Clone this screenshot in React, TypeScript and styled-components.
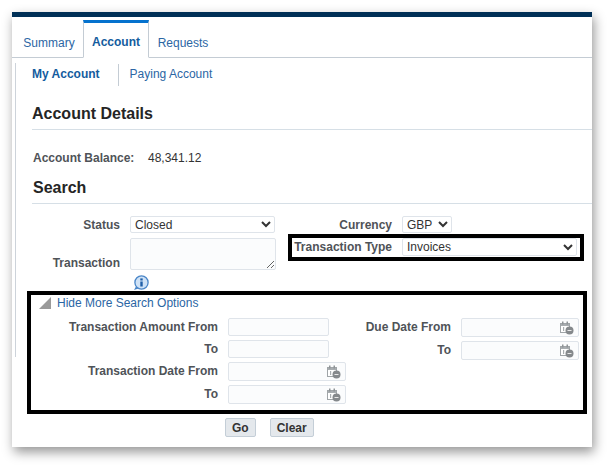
import React from "react";
import styled, { createGlobalStyle } from "styled-components";

const Global = createGlobalStyle`
  html, body { margin: 0; padding: 0; background: #fff; }
  body { font-family: "Liberation Sans", Arial, sans-serif; font-size: 12px; color: #4f5358; }
`;

const Page = styled.div`
  padding: 12px 18px 18px 12px;
  width: 610px;
  height: 465px;
  box-sizing: border-box;
  overflow: hidden;
`;

const Card = styled.div`
  width: 580px;
  height: 435px;
  background: #fff;
  box-shadow: 2px 5px 11px rgba(0, 0, 0, 0.42);
  border-top: 5px solid #003057;
  box-sizing: border-box;
`;

const Tabs = styled.div`
  display: flex;
  height: 41px;
  padding: 3px 0 0 3px;
  box-sizing: border-box;
  border-bottom: 1px solid #c4ccd4;
  margin-bottom: 0;
`;

const Tab = styled.a<{ $active?: boolean; $w: number }>`
  width: ${(p) => p.$w}px;
  box-sizing: border-box;
  text-align: center;
  font-size: 12px;
  color: ${(p) => (p.$active ? "#145c9e" : "#2b66a4")};
  font-weight: ${(p) => (p.$active ? 700 : 400)};
  line-height: ${(p) => (p.$active ? "39px" : "46px")};
  height: ${(p) => (p.$active ? "38px" : "37px")};
  ${(p) =>
    p.$active
      ? "border: 1px solid #c4ccd4; border-top: 3px solid #0572ce; border-bottom: 1px solid #fff; background: #fff;"
      : ""}
`;

const Panel = styled.div`
  position: relative;
  margin-left: 3px;
  padding-left: 17px;
  &::before {
    content: "";
    position: absolute;
    left: 0;
    top: -1px;
    width: 1px;
    height: 294px;
    background: #cdd3da;
  }
`;

const SubNav = styled.div`
  display: flex;
  align-items: center;
  height: 22px;
  margin-top: 6px;
`;

const SubLink = styled.a<{ $active?: boolean }>`
  font-size: 12px;
  margin-bottom: 2px;
  color: ${(p) => (p.$active ? "#145c9e" : "#2b66a4")};
  font-weight: ${(p) => (p.$active ? 700 : 400)};
`;

const SubDivider = styled.span`
  width: 1px;
  height: 22px;
  background: #c4ccd4;
  margin: 0 11px 0 18px;
`;

const Heading = styled.h2<{ $top: number }>`
  margin: ${(p) => p.$top}px 0 0;
  padding-bottom: 6px;
  font-size: 16px;
  line-height: 18px;
  font-weight: 700;
  color: #252525;
  border-bottom: 1px solid #d6dfe6;
`;

const SearchHeading = styled(Heading)`
  padding-left: 1px;
`;

const BalanceRow = styled.div`
  display: flex;
  margin: 21px 0 0 1px;
  line-height: 14px;
  font-size: 12px;
`;

const BalanceLabel = styled.span`
  width: 115px;
  font-weight: 700;
  color: #4f5358;
`;

const BalanceValue = styled.span`
  color: #333;
`;

const FormGrid = styled.div`
  display: flex;
  padding-top: 12px;
`;

const LeftColumn = styled.div`
  width: 256px;
  display: flex;
  flex-direction: column;
`;

const RightColumn = styled.div`
  display: flex;
  flex-direction: column;
  width: 296px;
`;

const Row = styled.div<{ $end?: boolean; $top?: number }>`
  display: flex;
  align-items: ${(p) => (p.$end ? "flex-end" : "center")};
  gap: 10px;
  margin-top: ${(p) => p.$top ?? 0}px;
`;

const Label = styled.label<{ $w: number; $raise?: number }>`
  width: ${(p) => p.$w}px;
  flex: none;
  text-align: right;
  font-size: 12px;
  font-weight: 700;
  line-height: 14px;
  color: #4f5358;
  white-space: nowrap;
  margin-bottom: ${(p) => p.$raise ?? 0}px;
`;

const NativeSelect = styled.select<{ $w: number; $h?: number }>`
  width: ${(p) => p.$w}px;
  height: ${(p) => p.$h ?? 17}px;
  box-sizing: border-box;
  font-family: "Liberation Sans", Arial, sans-serif;
  font-size: 12px;
  color: #333;
  background: #fff;
  border: 1px solid #dfe4ea;
  border-radius: 2px;
  padding: 0;
  outline: none;
`;

const TextBox = styled.textarea`
  display: block;
  width: 146px;
  height: 32px;
  box-sizing: border-box;
  margin: 0;
  background: #fbfcfd;
  border: 1px solid #dfe4ea;
  border-radius: 2px;
  outline: none;
`;

const InfoWrap = styled.div`
  height: 16px;
  margin: 5px 0 0 101px;
`;

const Highlight = styled.div`
  border: 4px solid #000;
  box-sizing: border-box;
`;

const TypeBox = styled(Highlight)`
  height: 27px;
  margin-top: 1px;
  padding-top: 0;
`;

const OptionsBox = styled(Highlight)`
  width: 560px;
  height: 123px;
  margin-left: -5px;
`;

const ToggleRow = styled.div`
  display: flex;
  align-items: center;
  height: 14px;
  padding: 1px 0 0 8px;
  gap: 6px;
`;

const ToggleLink = styled.a`
  font-size: 12px;
  color: #2b66a4;
`;

const OptionsGrid = styled.div`
  display: flex;
  margin-top: 8px;
`;

const OptionsColumn = styled.div<{ $w: number }>`
  width: ${(p) => p.$w}px;
  display: flex;
  flex-direction: column;
`;

const Field = styled.div<{ $w: number; $h: number }>`
  width: ${(p) => p.$w}px;
  height: ${(p) => p.$h}px;
  box-sizing: border-box;
  background: #fbfcfd;
  border: 1px solid #dfe4ea;
  border-radius: 2px;
  display: flex;
  align-items: center;
  justify-content: flex-end;
  padding-right: 4px;
`;

const ButtonBar = styled.div`
  display: flex;
  gap: 14px;
  margin: 4px 0 0 193px;
`;

const Button = styled.button`
  height: 19px;
  padding: 0 6px;
  box-sizing: border-box;
  font-family: "Liberation Sans", Arial, sans-serif;
  font-size: 12px;
  font-weight: 700;
  color: #333;
  background: #e4e8ec;
  border: 1px solid #c4ced7;
  border-radius: 2px;
`;

const Calendar = () => (
  <svg width="14" height="14" viewBox="0 0 14 14" aria-hidden="true">
    <rect x="0.5" y="2.5" width="9" height="9" fill="#fff" stroke="#a0a5a8" />
    <rect x="1" y="3" width="8" height="2" fill="#a8adb0" />
    <rect x="2" y="0.5" width="1.5" height="3" fill="#8f9497" />
    <rect x="6.5" y="0.5" width="1.5" height="3" fill="#8f9497" />
    <rect x="3" y="6" width="1.2" height="4" fill="#a8adb0" />
    <circle cx="9.5" cy="9.5" r="4" fill="#85898c" />
    <rect x="7.5" y="9" width="4" height="1" fill="#e8e8e8" />
  </svg>
);

const InfoIcon = () => (
  <svg width="16" height="16" viewBox="0 0 16 16" aria-hidden="true">
    <path d="M3 11.5 L1 15 L5.5 13.5 Z" fill="#4a86c8" />
    <circle cx="8.5" cy="7.5" r="6.6" fill="#cfe2f6" stroke="#4a86c8" strokeWidth="1.3" />
    <rect x="7.3" y="6.5" width="2.4" height="5" fill="#1f5fa8" />
    <rect x="7.3" y="3.4" width="2.4" height="2.1" fill="#1f5fa8" />
  </svg>
);

const Triangle = () => (
  <svg width="12" height="12" viewBox="0 0 12 12" aria-hidden="true">
    <path d="M12 0 V12 H0 Z" fill="#9a9a9a" />
  </svg>
);

export default function App() {
  return (
    <Page>
      <Global />
      <Card>
        <Tabs>
          <Tab $w={68}>Summary</Tab>
          <Tab $active $w={66}>Account</Tab>
          <Tab $w={68}>Requests</Tab>
        </Tabs>
        <Panel>
          <SubNav>
            <SubLink $active>My Account</SubLink>
            <SubDivider />
            <SubLink>Paying Account</SubLink>
          </SubNav>
          <Heading $top={19}>Account Details</Heading>
          <BalanceRow>
            <BalanceLabel>Account Balance:</BalanceLabel>
            <BalanceValue>48,341.12</BalanceValue>
          </BalanceRow>
          <SearchHeading $top={14}>Search</SearchHeading>
          <FormGrid>
            <LeftColumn>
              <Row>
                <Label $w={88}>Status</Label>
                <NativeSelect $w={145} defaultValue="Closed">
                  <option>Closed</option>
                </NativeSelect>
              </Row>
              <Row $end $top={5}>
                <Label $w={88}>Transaction</Label>
                <TextBox />
              </Row>
              <InfoWrap>
                <InfoIcon />
              </InfoWrap>
            </LeftColumn>
            <RightColumn>
              <Row>
                <Label $w={104}>Currency</Label>
                <NativeSelect $w={50} defaultValue="GBP">
                  <option>GBP</option>
                </NativeSelect>
              </Row>
              <TypeBox>
                <Row>
                  <Label $w={100}>Transaction Type</Label>
                  <NativeSelect $w={175} $h={18} defaultValue="Invoices">
                    <option>Invoices</option>
                  </NativeSelect>
                </Row>
              </TypeBox>
            </RightColumn>
          </FormGrid>
          <OptionsBox>
            <ToggleRow>
              <Triangle />
              <ToggleLink>Hide More Search Options</ToggleLink>
            </ToggleRow>
            <OptionsGrid>
              <OptionsColumn $w={323}>
                <Row>
                  <Label $w={187}>Transaction Amount From</Label>
                  <Field $w={101} $h={18} />
                </Row>
                <Row $top={4}>
                  <Label $w={187}>To</Label>
                  <Field $w={101} $h={18} />
                </Row>
                <Row $top={4}>
                  <Label $w={187} $raise={1}>Transaction Date From</Label>
                  <Field $w={118} $h={19}>
                    <Calendar />
                  </Field>
                </Row>
                <Row $top={4}>
                  <Label $w={187} $raise={1}>To</Label>
                  <Field $w={118} $h={19}>
                    <Calendar />
                  </Field>
                </Row>
              </OptionsColumn>
              <OptionsColumn $w={225}>
                <Row>
                  <Label $w={97} $raise={1}>Due Date From</Label>
                  <Field $w={118} $h={19}>
                    <Calendar />
                  </Field>
                </Row>
                <Row $top={4}>
                  <Label $w={97} $raise={1}>To</Label>
                  <Field $w={118} $h={19}>
                    <Calendar />
                  </Field>
                </Row>
              </OptionsColumn>
            </OptionsGrid>
          </OptionsBox>
          <ButtonBar>
            <Button>Go</Button>
            <Button>Clear</Button>
          </ButtonBar>
        </Panel>
      </Card>
    </Page>
  );
}
